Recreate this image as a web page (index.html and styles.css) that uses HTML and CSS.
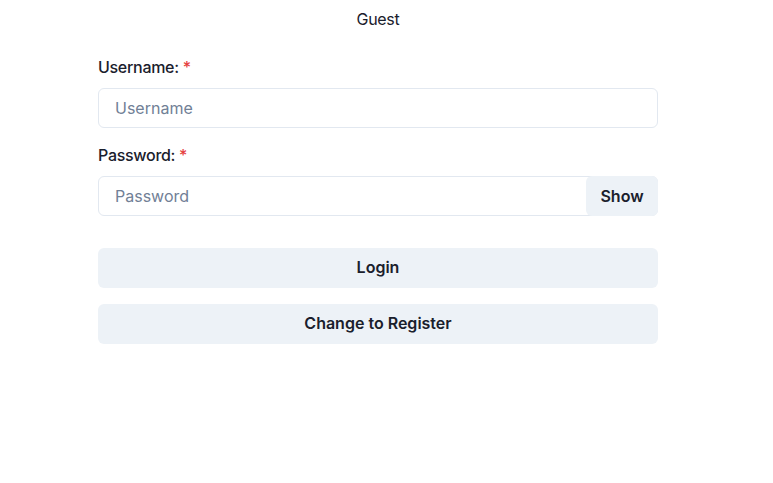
FILE: index.html
```html
<!DOCTYPE html>
<html lang="en">
<head>
<meta charset="utf-8">
<link rel="stylesheet" href="styles.css">
<title>Login</title>
</head>
<body>
  <div class="page">
    <div class="form">
      <div class="user">Guest</div>
      <div class="field field-first">
        <label class="label" for="u">Username:<span class="req">*</span></label>
        <input class="input" id="u" type="text" placeholder="Username">
      </div>
      <div class="field">
        <label class="label" for="p">Password:<span class="req">*</span></label>
        <div class="group">
          <input class="input input-pw" id="p" type="password" placeholder="Password">
          <button class="show" type="button">Show</button>
        </div>
      </div>
      <button class="btn btn-login" type="button">Login</button>
      <button class="btn" type="button">Change to Register</button>
    </div>
  </div>
</body>
</html>
```
FILE: styles.css
```css
* { box-sizing: border-box; }
html, body { margin: 0; padding: 0; background: #fff; }
body {
  font-family: Inter, "Noto Sans", sans-serif;
  color: #1a202c;
  font-size: 16px;
  line-height: 24px;
}
.page {
  padding: 7px 0 0 98px;
}
.form {
  width: 560px;
  display: flex;
  flex-direction: column;
}
.user {
  text-align: center;
  font-size: 16px;
  line-height: 24px;
  height: 24px;
  letter-spacing: -0.3px;
}
.field { display: flex; flex-direction: column; margin-top: 15px; }
.field-first { margin-top: 24px; }
.label {
  font-weight: 500;
  font-size: 16px;
  line-height: 24px;
  margin-bottom: 9px;
  display: block;
  letter-spacing: -0.3px;
}
.req { color: #e53e3e; margin-left: 4px; }
.input {
  height: 40px;
  width: 100%;
  border: 1px solid #e2e8f0;
  border-radius: 6px;
  padding: 0 16px;
  font-family: inherit;
  font-size: 16px;
  color: #1a202c;
  background: #fff;
  outline: none;
}
.input::placeholder { color: #718096; }
.group { display: flex; position: relative; }
.show {
  position: absolute;
  right: 0;
  top: 0;
  height: 40px;
  width: 72px;
  border: none;
  border-radius: 6px;
  background: #edf2f7;
  font-family: inherit;
  font-weight: 600;
  font-size: 16px;
  color: #1a202c;
  padding: 0;
}
.btn {
  height: 40px;
  width: 100%;
  border: none;
  border-radius: 6px;
  background: #edf2f7;
  font-family: inherit;
  font-weight: 600;
  font-size: 16px;
  line-height: 22px;
  color: #1a202c;
  margin-top: 16px;
  padding: 0 0 2px;
}
.btn-login { margin-top: 32px; }
```
